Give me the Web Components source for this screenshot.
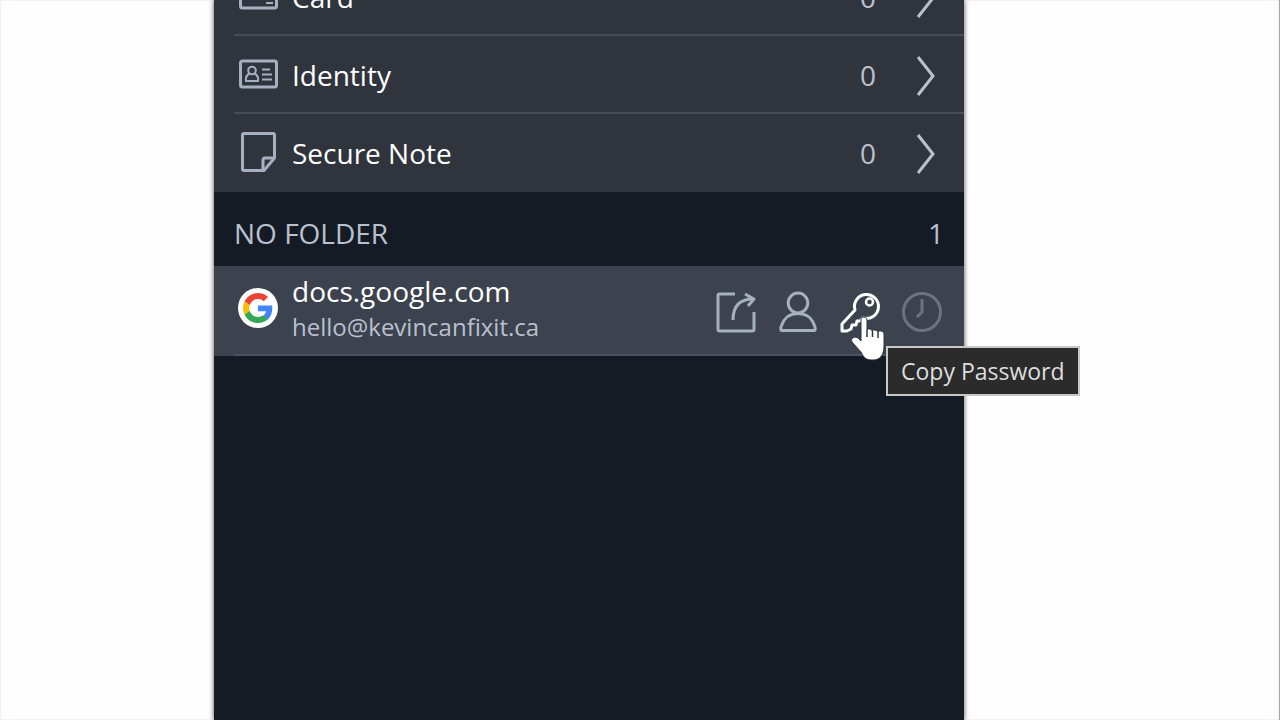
<!DOCTYPE html>
<html lang="en">
<head>
<meta charset="UTF-8">
<title>Vault</title>
<style>
    :root {
        --bg: #141b24;
        --row-bg: #2f343d;
        --row-active: #3c424e;
        --line: #474c56;
        --line-active: #4c525f;
        --text: #ffffff;
        --muted: #bac0ce;
        --icon: #a5b1c0;
    }
    * {
        box-sizing: border-box;
    }
    body {
        margin: 0;
        background: #fefefe;
        color: var(--text);
        font: 28px/40px "Open Sans", "Noto Sans", sans-serif;
    }
    main {
        display: flex;
        justify-content: center;
        height: 100vh;
        padding-right: 101px;
        overflow: hidden;
        border-right: 1px solid #a8a8a8;
        box-shadow: inset 0 0 0 1px #fbeef0;
    }
</style>
</head>
<body>
<main>
    <vault-popup>
        <type-row label="Card" count="0" icon="card"></type-row>
        <type-row label="Identity" count="0" icon="identity"></type-row>
        <type-row label="Secure Note" count="0" icon="note"></type-row>
        <folder-header count="1">No Folder</folder-header>
        <cipher-row>
            <site-icon slot="icon"></site-icon>
            <span slot="name">docs.google.com</span>
            <span slot="user">hello@kevincanfixit.ca</span>
            <icon-button slot="actions" icon="launch" label="Launch"></icon-button>
            <icon-button slot="actions" icon="user" label="Copy Username"></icon-button>
            <icon-button slot="actions" icon="key" label="Copy Password" active>
                <hand-cursor slot="over"></hand-cursor>
                <tool-tip slot="over">Copy Password</tool-tip>
            </icon-button>
            <icon-button slot="actions" icon="clock" label="Copy Verification Code" disabled></icon-button>
        </cipher-row>
    </vault-popup>
</main>

<script>
const ICONS = {
    card: `<rect x="2.500" y="6" width="36" height="26" rx="2" stroke-width="3"/><path d="M3 14h35" stroke-width="4"/><path d="M28 27h7" stroke-width="2"/>`,
    identity: `<rect x="2.500" y="7" width="36" height="26" rx="2" stroke-width="3"/>
        <circle cx="14" cy="16.500" r="3.800" stroke-width="2"/>
        <path d="M11.500 19.500C8.500 21 7.500 23.500 8 27h12c.5-3.500-.5-6-3.500-7.500" stroke-width="2"/>
        <path d="M24 15.500h8M24 20.500h10M24 25.500h10" stroke-width="2"/>`,
    note: `<path d="M6 1.500h29a1.500 1.500 0 0 1 1.500 1.500v23L26 38.500H6A1.500 1.500 0 0 1 4.500 37V3A1.500 1.500 0 0 1 6 1.500z" stroke-width="3"/>
        <path d="M25 38V28a2 2 0 0 1 2-2h9" stroke-width="3"/>`,
    launch: `<path d="M19 2H3.500A1.500 1.500 0 0 0 2 3.500v34A1.500 1.500 0 0 0 3.500 39h33a1.500 1.500 0 0 0 1.500-1.500V20" stroke-width="3"/>
        <path d="M17 28C17 15 23 7 37 7M29 2l9 5-6 7" stroke-width="3"/>`,
    user: `<ellipse cx="20" cy="11" rx="9.800" ry="10" stroke-width="3"/>
        <path d="M3.500 38.500c-1.500-1-.8-3 0-5C5.500 27 11 21.500 20 21.500s14.500 5.500 16.500 12c.8 2 1.500 4 0 5z" stroke-width="3"/>`,
    key: `<path d="M15 18a12 12 0 1 1 8 8l-3 3h-3l-1 4h-4l-1 4-4 2H2v-7z" stroke-width="3"/>
        <circle cx="29.500" cy="10" r="3.500" stroke-width="2.500"/>`,
    clock: `<circle cx="20" cy="20" r="18.500" stroke-width="3"/><path d="M20 7v13l-5 5" stroke-width="3"/>`
};

function svgIcon(name) {
    return `<svg width="40" height="40" viewBox="0 0 40 40" fill="none" stroke="currentColor" stroke-linejoin="round" overflow="visible" aria-hidden="true">${ICONS[name]}</svg>`;
}

class VaultPopup extends HTMLElement {
    connectedCallback() {
        this.attachShadow({ mode: 'open' });
        this.shadowRoot.innerHTML = `
            <style>
                :host {
                    display: block;
                    flex: 0 1 750px;
                    background: var(--bg);
                    box-shadow: 0 0 5px rgba(0, 0, 0, 0.7);
                }
                /* the list is scrolled part way through the first row */
                .list {
                    display: flex;
                    flex-direction: column;
                    margin-top: -42px;
                }
            </style>
            <div class="list"><slot></slot></div>
        `;
    }
}

class TypeRow extends HTMLElement {
    connectedCallback() {
        this.attachShadow({ mode: 'open' });
        this.shadowRoot.innerHTML = `
            <style>
                :host {
                    display: block;
                    background: var(--row-bg);
                    padding-left: 20px;
                }
                button {
                    display: flex;
                    align-items: center;
                    gap: 10px;
                    box-sizing: border-box;
                    width: 100%;
                    height: 78px;
                    padding: 0 28px 0 0;
                    border: none;
                    border-bottom: 2px solid var(--line);
                    background: none;
                    color: inherit;
                    font: inherit;
                    text-align: left;
                    cursor: pointer;
                }
                :host(:nth-of-type(3)) button {
                    border-bottom-color: transparent;
                }
                .icon {
                    display: flex;
                    justify-content: center;
                    width: 48px;
                    color: var(--icon);
                }
                .label {
                    flex: 1;
                    padding-top: 2px;
                }
                .count {
                    padding: 2px 30px 0 0;
                    color: var(--muted);
                }
                .chevron {
                    padding-top: 4px;
                    color: var(--muted);
                }
            </style>
            <button type="button">
                <span class="icon">${svgIcon(this.getAttribute('icon'))}</span>
                <span class="label">${this.getAttribute('label')}</span>
                <span class="count">${this.getAttribute('count')}</span>
                <svg class="chevron" width="20" height="40" viewBox="0 0 20 40" fill="none" stroke="currentColor" stroke-width="3" aria-hidden="true"><path d="M2 1l15 19L2 39"/></svg>
            </button>
        `;
    }
}

class FolderHeader extends HTMLElement {
    connectedCallback() {
        this.attachShadow({ mode: 'open' });
        this.shadowRoot.innerHTML = `
            <style>
                :host {
                    display: flex;
                    justify-content: space-between;
                    padding: 21px 20px 13px 20px;
                    color: var(--muted);
                    text-transform: uppercase;
                }
            </style>
            <slot></slot>
            <span>${this.getAttribute('count')}</span>
        `;
    }
}

class CipherRow extends HTMLElement {
    connectedCallback() {
        this.attachShadow({ mode: 'open' });
        this.shadowRoot.innerHTML = `
            <style>
                :host {
                    display: block;
                    padding-left: 20px;
                    background: var(--row-active);
                }
                .row {
                    display: flex;
                    align-items: center;
                    gap: 10px;
                    padding: 7px 22px 7px 0;
                    border-bottom: 2px solid var(--line-active);
                }
                .icon {
                    display: flex;
                    justify-content: center;
                    width: 48px;
                    padding-bottom: 4px;
                }
                .text {
                    flex: 1;
                    padding-bottom: 2px;
                    line-height: 36px;
                }
                .name, .user {
                    display: block;
                }
                .user {
                    color: var(--muted);
                    font-size: 24px;
                }
                .actions {
                    display: flex;
                    gap: 22px;
                    padding-top: 4px;
                }
            </style>
            <div class="row">
                <div class="icon"><slot name="icon"></slot></div>
                <div class="text">
                    <span class="name"><slot name="name"></slot></span>
                    <span class="user"><slot name="user"></slot></span>
                </div>
                <div class="actions"><slot name="actions"></slot></div>
            </div>
        `;
    }
}

class SiteIcon extends HTMLElement {
    connectedCallback() {
        this.attachShadow({ mode: 'open' });
        this.shadowRoot.innerHTML = `
            <style>
                :host { display: block; }
                svg { display: block; }
            </style>
            <svg width="40" height="40" viewBox="0 0 40 40" aria-hidden="true">
                <circle cx="20" cy="20" r="20" fill="#fff"/>
                <g transform="translate(5 5) scale(.625)">
                    <path fill="#EA4335" d="M24 9.500c3.540 0 6.710 1.220 9.210 3.600l6.850-6.850C35.900 2.380 30.470 0 24 0 14.620 0 6.510 5.380 2.560 13.220l7.980 6.190C12.430 13.720 17.740 9.500 24 9.500z"/>
                    <path fill="#4285F4" d="M46.980 24.550c0-1.570-.15-3.090-.38-4.550H24v9.020h12.940c-.58 2.960-2.260 5.480-4.780 7.180l7.730 6c4.510-4.180 7.090-10.360 7.090-17.650z"/>
                    <path fill="#FBBC05" d="M10.530 28.590c-.48-1.450-.76-2.990-.76-4.590s.27-3.140.76-4.590l-7.980-6.190C.92 16.460 0 20.120 0 24s.92 7.540 2.560 10.780l7.970-6.190z"/>
                    <path fill="#34A853" d="M24 48c6.480 0 11.930-2.130 15.890-5.810l-7.730-6c-2.150 1.450-4.920 2.300-8.160 2.300-6.260 0-11.570-4.220-13.470-9.910l-7.980 6.190C6.510 42.620 14.620 48 24 48z"/>
                </g>
            </svg>
        `;
    }
}

class IconButton extends HTMLElement {
    connectedCallback() {
        const label = this.getAttribute('label');
        this.attachShadow({ mode: 'open' });
        this.shadowRoot.innerHTML = `
            <style>
                :host {
                    display: block;
                    position: relative;
                    color: var(--icon);
                }
                :host([active]) {
                    color: #fff;
                }
                :host([disabled]) {
                    color: #6c737f;
                }
                button {
                    display: block;
                    padding: 0;
                    border: none;
                    background: none;
                    color: inherit;
                    cursor: pointer;
                }
                svg {
                    display: block;
                }
            </style>
            <button type="button" aria-label="${label}" ${this.hasAttribute('disabled') ? 'disabled' : ''}>${svgIcon(this.getAttribute('icon'))}</button>
            <slot name="over"></slot>
        `;
    }
}

class HandCursor extends HTMLElement {
    connectedCallback() {
        this.attachShadow({ mode: 'open' });
        this.shadowRoot.innerHTML = `
            <style>
                :host {
                    position: absolute;
                    top: 24px;
                    left: 10px;
                    pointer-events: none;
                }
                svg { display: block; }
            </style>
            <svg width="36" height="46" viewBox="0 0 36 46" aria-hidden="true">
                <path d="M11 4c0-4 6-4 6 0v10c1-2 5-1 5 1 1-2 5-1 6 1 1-2 6-1 6 2v12c0 9-4 14-11 14-7 0-9-2-12-8L2 26c-2-4 3-6 6-4l3 3z" fill="#fff" stroke="#30353f" stroke-width="1"/>
                <path d="M17 14v7M22.500 15v6M28 16v6" fill="none" stroke="#30353f" stroke-width="1.500"/>
            </svg>
        `;
    }
}

class ToolTip extends HTMLElement {
    connectedCallback() {
        this.attachShadow({ mode: 'open' });
        this.setAttribute('role', 'tooltip');
        this.shadowRoot.innerHTML = `
            <style>
                :host {
                    position: absolute;
                    top: 54px;
                    left: 46px;
                    padding: 7px 13px;
                    border: 2px solid #c8c8c8;
                    background: #2b2b2b;
                    color: #dedede;
                    font-size: 23px;
                    line-height: 32px;
                    white-space: nowrap;
                }
            </style>
            <slot></slot>
        `;
    }
}

customElements.define('vault-popup', VaultPopup);
customElements.define('type-row', TypeRow);
customElements.define('folder-header', FolderHeader);
customElements.define('cipher-row', CipherRow);
customElements.define('site-icon', SiteIcon);
customElements.define('icon-button', IconButton);
customElements.define('hand-cursor', HandCursor);
customElements.define('tool-tip', ToolTip);
</script>
</body>
</html>
